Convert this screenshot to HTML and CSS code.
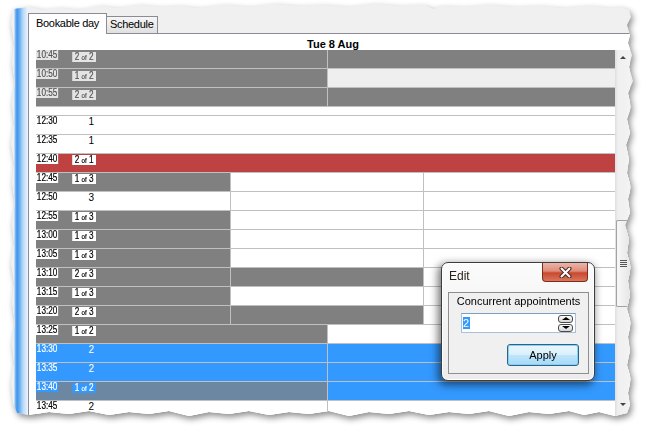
FILE: index.html
```html
<!DOCTYPE html>
<html lang="en">
<head>
  <meta charset="UTF-8" />
  <title>Bookable day</title>
  <link rel="stylesheet" href="styles.css">
</head>
<body>
  <div class="paper">
    <div class="sheet">
      <div class="tabs">
        <div class="tab on">Bookable day</div>
        <div class="tab">Schedule</div>
      </div>

      <div class="panel">
        <div class="day">Tue 8 Aug</div>
        <div class="view">
          <div class="grid">
            <div class="row two dim">
              <div class="cell gray"><span class="time">10:45</span><span class="num"><b>2 <i>of</i> 2</b></span></div>
              <div class="cell gray"></div>
            </div>
            <div class="row two dim">
              <div class="cell gray"><span class="time">10:50</span><span class="num"><b>1 <i>of</i> 2</b></span></div>
              <div class="cell light"></div>
            </div>
            <div class="row two dim">
              <div class="cell gray"><span class="time">10:55</span><span class="num"><b>2 <i>of</i> 2</b></span></div>
              <div class="cell gray"></div>
            </div>
            <div class="gap"></div>

            <div class="row">
              <div class="cell"><span class="time">12:30</span><span class="num">1</span></div>
            </div>
            <div class="row">
              <div class="cell"><span class="time">12:35</span><span class="num">1</span></div>
            </div>
            <div class="row boxed">
              <div class="cell red"><span class="time">12:40</span><span class="num"><b>2 <i>of</i> 1</b></span></div>
            </div>
            <div class="row three boxed">
              <div class="cell gray"><span class="time">12:45</span><span class="num"><b>1 <i>of</i> 3</b></span></div>
              <div class="cell"></div>
              <div class="cell"></div>
            </div>
            <div class="row three">
              <div class="cell"><span class="time">12:50</span><span class="num">3</span></div>
              <div class="cell"></div>
              <div class="cell"></div>
            </div>
            <div class="row three boxed">
              <div class="cell gray"><span class="time">12:55</span><span class="num"><b>1 <i>of</i> 3</b></span></div>
              <div class="cell"></div>
              <div class="cell"></div>
            </div>
            <div class="row three boxed">
              <div class="cell gray"><span class="time">13:00</span><span class="num"><b>1 <i>of</i> 3</b></span></div>
              <div class="cell"></div>
              <div class="cell"></div>
            </div>
            <div class="row three boxed">
              <div class="cell gray"><span class="time">13:05</span><span class="num"><b>1 <i>of</i> 3</b></span></div>
              <div class="cell"></div>
              <div class="cell"></div>
            </div>
            <div class="row three boxed">
              <div class="cell gray"><span class="time">13:10</span><span class="num"><b>2 <i>of</i> 3</b></span></div>
              <div class="cell gray"></div>
              <div class="cell"></div>
            </div>
            <div class="row three boxed">
              <div class="cell gray"><span class="time">13:15</span><span class="num"><b>1 <i>of</i> 3</b></span></div>
              <div class="cell"></div>
              <div class="cell"></div>
            </div>
            <div class="row three boxed">
              <div class="cell gray"><span class="time">13:20</span><span class="num"><b>2 <i>of</i> 3</b></span></div>
              <div class="cell gray"></div>
              <div class="cell"></div>
            </div>
            <div class="row two boxed">
              <div class="cell gray"><span class="time">13:25</span><span class="num"><b>1 <i>of</i> 2</b></span></div>
              <div class="cell"></div>
            </div>
            <div class="row two sel">
              <div class="cell blue"><span class="time">13:30</span><span class="num">2</span></div>
              <div class="cell blue"></div>
            </div>
            <div class="row two sel">
              <div class="cell blue"><span class="time">13:35</span><span class="num">2</span></div>
              <div class="cell blue"></div>
            </div>
            <div class="row two sel boxed">
              <div class="cell slate"><span class="time">13:40</span><span class="num"><b>1 <i>of</i> 2</b></span></div>
              <div class="cell blue"></div>
            </div>
            <div class="row two">
              <div class="cell"><span class="time">13:45</span><span class="num">2</span></div>
              <div class="cell"></div>
            </div>
          </div>

          <div class="vscroll">
            <div class="sb-btn"><i class="arr-up"></i></div>
            <div class="sb-track1"></div>
            <div class="sb-thumb"><i class="grip"></i></div>
            <div class="sb-track2"></div>
            <div class="sb-btn"><i class="arr-down"></i></div>
          </div>
        </div>
      </div>
    </div>
  </div>

  <!-- Edit dialog -->
  <div class="dlg">
    <div class="dlg-title">Edit</div>
    <div class="dlg-close">
      <svg width="13" height="11" viewBox="0 0 13 11">
        <path d="M2.5 1.5 L10.5 9.5 M10.5 1.5 L2.5 9.5" stroke="#4a2a24" stroke-width="4" stroke-linecap="round" fill="none"/>
        <path d="M2.5 1.5 L10.5 9.5 M10.5 1.5 L2.5 9.5" stroke="#fff" stroke-width="2" stroke-linecap="round" fill="none"/>
      </svg>
    </div>
    <div class="dlg-client">
      <div class="dlg-label">Concurrent appointments</div>
      <div class="spin">
        <span class="spin-val"><span class="sel-text">2</span></span>
        <span class="spin-btns">
          <span class="spin-btn"><i class="arr-up"></i></span>
          <span class="spin-btn"><i class="arr-down"></i></span>
        </span>
      </div>
      <button class="btn">Apply</button>
    </div>
  </div>
</body>
</html>
```

FILE: styles.css
```css
* { box-sizing: border-box; }

body {
  margin: 0;
  width: 647px;
  height: 430px;
  overflow: hidden;
  position: relative;
  background: #fff;
  color: #000;
  font-family: "Liberation Sans", Arial, sans-serif;
}

/* torn paper frame */
.paper {
  padding: 3px 0 0 9px;
  filter: drop-shadow(2px 3px 3px rgba(0, 0, 0, 0.45));
}

.sheet {
  width: 628px;
  height: 418px;
  overflow: hidden;
  display: flex;
  flex-direction: column;
  padding: 10px 0 0 19px;
  background:
    linear-gradient(to right, #f0f0f0 0, #f0f0f0 5px, #8cc2f5 6px, #3d94ee 8px, #5ea8f0 10px, #b8d8f7 14px, #eef5fd 19px) 0 0 / 19px 100% no-repeat,
    #f0f0f0;
  clip-path: polygon(
    4px 6px, 20px 4px, 35px 7px, 50px 5px, 70px 7px, 90px 3px, 110px 5px, 130px 2px, 150px 4px, 170px 3px,
    190px 5px, 215px 2px, 240px 4px, 265px 1px, 290px 3px, 315px 2px, 340px 4px, 365px 1px, 390px 3px,
    415px 2px, 425px 6px, 430px 3px, 455px 4px, 480px 2px, 505px 4px, 530px 3px, 555px 5px, 580px 3px,
    600px 5px, 612px 4px, 620px 7px,
    622px 14px, 618px 22px, 621px 32px, 619px 40px, 623px 52px, 620px 64px, 624px 78px, 619px 90px,
    622px 104px, 618px 116px, 621px 130px, 617px 142px, 620px 156px, 618px 170px, 622px 184px,
    619px 196px, 621px 210px, 616px 222px, 620px 236px, 618px 250px, 622px 264px, 619px 278px,
    621px 292px, 618px 306px, 622px 320px, 619px 334px, 621px 348px, 618px 362px, 622px 376px,
    619px 390px, 621px 402px, 618px 410px,
    606px 413px, 590px 409px, 575px 412px, 560px 408px, 540px 411px, 520px 409px, 500px 413px,
    480px 408px, 460px 411px, 440px 409px, 420px 412px, 400px 408px, 380px 411px, 360px 409px,
    340px 413px, 320px 408px, 300px 411px, 280px 409px, 260px 412px, 240px 408px, 220px 411px,
    200px 409px, 180px 413px, 160px 408px, 140px 411px, 120px 409px, 100px 412px, 80px 408px,
    60px 411px, 40px 409px, 20px 412px, 8px 410px,
    4px 400px, 2px 380px, 5px 360px, 3px 340px, 6px 320px, 3px 300px, 5px 280px, 2px 260px, 5px 240px,
    3px 220px, 6px 200px, 3px 180px, 5px 160px, 2px 140px, 5px 120px, 3px 100px, 6px 80px, 3px 60px,
    5px 40px, 2px 20px
  );
}

/* tabs */
.tabs {
  display: flex;
  align-items: flex-end;
  height: 20px;
  flex-shrink: 0;
}

.tab {
  font-size: 11px;
  line-height: 13px;
  letter-spacing: -0.3px;
  height: 17px;
  width: 51px;
  padding: 1px 0 0 3px;
  border: 1px solid #898c95;
  border-left: none;
  border-bottom: none;
  background: linear-gradient(#f6f6f6, #e0e0e0);
}

.tab.on {
  position: relative;
  z-index: 1;
  width: 79px;
  height: 21px;
  margin-bottom: -1px;
  padding: 3px 0 0 7px;
  border-left: 1px solid #898c95;
  background: #fff;
}

.panel {
  flex: 1;
  width: 602px;
  display: flex;
  flex-direction: column;
  padding-left: 7px;
  background: #fff;
  border-top: 1px solid #898c95;
  border-left: 1px solid #898c95;
}

.day {
  height: 16px;
  padding-top: 4px;
  line-height: 13px;
  font-size: 11px;
  font-weight: bold;
  text-align: center;
}

.view {
  display: flex;
}

.grid {
  width: 579px;
}

/* rows */
.row {
  display: grid;
  grid-template-columns: 1fr;
  height: 19px;
  border-bottom: 1px solid #c0c0c0;
}

.row.two { grid-template-columns: 291px 1fr; }
.row.three { grid-template-columns: 194px 193px 1fr; }

.gap {
  height: 9px;
  border-bottom: 1px solid #c0c0c0;
}

.cell {
  display: flex;
  align-items: flex-start;
  background: #fff;
}

.cell + .cell { border-left: 1px solid #c0c0c0; }

.cell.gray { background: #808080; }
.cell.light { background: #efefef; }
.cell.red { background: #bf4242; }
.cell.blue { background: #3399ff; }
.cell.slate { background: #6c87a1; }

/* small labels: narrow pixel font look */
.time,
.num {
  font-size: 10px;
  line-height: 10px;
  height: 10px;
}

.time {
  width: 27px;
  padding-left: 1px;
  transform: scaleX(0.82);
  transform-origin: 0 0;
  -webkit-text-stroke: 0.2px currentColor;
}

.num {
  width: 33px;
  padding: 1px 2px 0 0;
  text-align: right;
}

.num b {
  display: inline-block;
  font-weight: normal;
  padding: 0 3px;
  height: 10px;
  margin: -1px -2px 0 0;
  transform: scaleX(0.82);
  transform-origin: 100% 0;
  -webkit-text-stroke: 0.2px currentColor;
}

.num i {
  font-style: normal;
  font-size: 7.5px;
}

.row.boxed .time,
.row.boxed .num b { background: #fff; }

.row.dim .time,
.row.dim .num b {
  background: #e4e4e4;
  color: #555;
}

.row.dim .num b { margin-top: 1px; }

.row.sel .time,
.row.sel .num { color: #fff; }

.row.sel.boxed .time,
.row.sel.boxed .num b { background: #3399ff; }

/* scrollbar */
.vscroll {
  width: 15px;
  display: flex;
  flex-direction: column;
  background: linear-gradient(to right, #dedede, #efefef 3px, #f3f3f3);
}

.sb-btn {
  height: 17px;
  display: flex;
  justify-content: center;
  padding-top: 6px;
}

.sb-track1 { height: 153px; }
.sb-track2 { height: 90px; }

.sb-thumb {
  height: 87px;
  margin-left: 1px;
  border: 1px solid #a2a2a2;
  border-right: none;
  border-radius: 2px 0 0 2px;
  background: linear-gradient(to right, #f8f8f8, #e6e6e6);
  display: flex;
  align-items: center;
  justify-content: center;
}

.grip {
  width: 7px;
  height: 7px;
  background: repeating-linear-gradient(#555 0, #555 1px, transparent 1px, transparent 2px);
}

.arr-up,
.arr-down {
  width: 0;
  height: 0;
  border-left: 3px solid transparent;
  border-right: 3px solid transparent;
}

.arr-up { border-bottom: 3px solid #444; }
.arr-down { border-top: 3px solid #444; }

/* edit dialog */
.dlg {
  position: absolute;
  left: 441px;
  top: 262px;
  width: 154px;
  height: 119px;
  display: flex;
  flex-direction: column;
  border: 1px solid #3d3d3d;
  border-radius: 7px;
  background: linear-gradient(#fbfbfb, #ececec);
  box-shadow: -2px 3px 9px 1px rgba(0, 0, 0, 0.55), inset 0 0 0 1px #fff;
}

.dlg-title {
  height: 29px;
  padding: 6px 0 0 7px;
  font-size: 12px;
  line-height: 14px;
  color: #2a2218;
}

.dlg-close {
  position: absolute;
  top: 0;
  right: 6px;
  width: 46px;
  height: 19px;
  display: flex;
  align-items: center;
  justify-content: center;
  border: 1px solid #7a2c1e;
  border-top: none;
  border-radius: 0 0 4px 4px;
  background: linear-gradient(#ebb5a8 0, #dd8c7a 45%, #c9482f 55%, #d8775c 100%);
}

.dlg-client {
  flex: 1;
  margin: 0 5px 6px 6px;
  display: flex;
  flex-direction: column;
  align-items: center;
  border: 1px solid #8f8f8f;
  background: #f0f0f0;
}

.dlg-label {
  margin-top: 1px;
  font-size: 11px;
  line-height: 14px;
}

.spin {
  width: 115px;
  height: 20px;
  margin-top: 5px;
  display: flex;
  align-items: center;
  padding: 0 2px 0 1px;
  background: #fff;
  border: 1px solid #a9c0d8;
  border-top-color: #7f9dbd;
}

.spin-val {
  flex: 1;
  font-size: 11px;
}

.sel-text {
  display: inline-block;
  width: 7px;
  height: 12px;
  line-height: 12px;
  background: #3399ff;
  color: #fff;
}

.spin-btns {
  width: 15px;
  display: flex;
  flex-direction: column;
  gap: 1px;
}

.spin-btn {
  height: 8px;
  display: flex;
  align-items: center;
  justify-content: center;
  border: 1px solid #4a4a4a;
  border-radius: 3px;
  background: linear-gradient(#fdfdfd, #d4d4d4);
}

.spin-btn .arr-up { border-bottom: 3px solid #000; border-left-width: 4px; border-right-width: 4px; }
.spin-btn .arr-down { border-top: 3px solid #000; border-left-width: 4px; border-right-width: 4px; }

.btn {
  align-self: flex-end;
  width: 72px;
  height: 22px;
  margin: 11px 9px 0 0;
  padding: 0;
  font-family: "Liberation Sans", Arial, sans-serif;
  font-size: 11px;
  color: #000;
  border: 1px solid #2c628b;
  border-radius: 3px;
  background: linear-gradient(#eaf6fd 0, #d9f0fc 50%, #bee6fd 50%, #a7d9f5 100%);
  box-shadow: inset 0 0 0 1px #86d0f4;
}
```
